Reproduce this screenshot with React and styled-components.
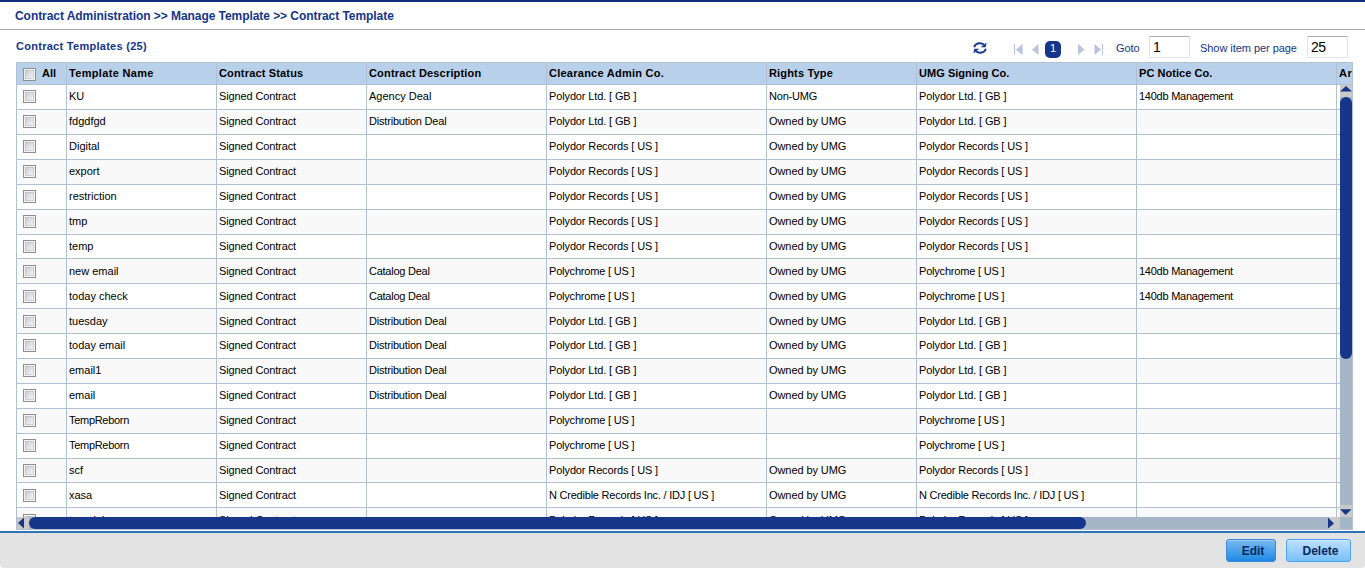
import React from 'react';
import styled, { createGlobalStyle } from 'styled-components';

const navy = '#15368a';
const line = '#b0c1d4';

const GlobalStyle = createGlobalStyle`
  * { box-sizing: border-box; }
  body { margin: 0; background: #fff; font-family: "Liberation Sans", Arial, sans-serif; font-size: 11px; color: #000; overflow: hidden; }
`;

const Page = styled.div`
  display: flex;
  flex-direction: column;
  height: 568px;
  border-top: 2px solid #112d80;
`;

const Breadcrumb = styled.div`
  height: 28px;
  flex: none;
  padding-left: 15px;
  border-bottom: 1px solid #a7aaab;
  font-weight: bold;
  font-size: 12px;
  line-height: 28px;
  letter-spacing: -0.06px;
  color: ${navy};
  white-space: nowrap;
`;

const Toolbar = styled.div`
  display: flex;
  height: 32px;
  flex: none;
  padding: 0 17px 0 16px;
  justify-content: space-between;
  color: ${navy};
  white-space: nowrap;
`;

const Title = styled.div`
  font-weight: bold;
  line-height: 33px;
  letter-spacing: 0.28px;
`;

const Pager = styled.div`
  display: flex;
  width: 375px;
  height: 32px;
`;

const PagerIcon = styled.svg`
  display: block;
  flex: none;
  margin-left: ${p => p.$gap}px;
  margin-top: ${p => p.$top}px;
`;

const PageNumber = styled.div`
  width: 16px;
  height: 17px;
  margin: 11px 0 0 6px;
  border-radius: 5px;
  background: ${navy};
  color: #fff;
  text-align: center;
  line-height: 15px;
`;

const FieldLabel = styled.label`
  flex: none;
  width: ${p => p.$w}px;
  margin-left: ${p => p.$gap}px;
  line-height: 36px;
  letter-spacing: -0.05px;
`;

const Field = styled.input`
  width: 41px;
  height: 22px;
  margin: 6px 0 0;
  padding: 0 0 1px 3px;
  border: 1px solid #e2e3ea;
  border-top-color: #abadb3;
  border-radius: 1px;
  font: 14px "Liberation Sans", Arial, sans-serif;
  letter-spacing: -0.6px;
  color: #000;
  outline: none;
`;

const Grid = styled.div`
  flex: none;
  width: 1337px;
  height: 468px;
  margin-left: 16px;
  border: 1px solid ${line};
`;

const HeaderRow = styled.div`
  display: flex;
  height: 22px;
  overflow: hidden;
  background: #b8d0ea;
  border-bottom: 1px solid ${line};
  font-weight: bold;
`;

const Body = styled.div`
  display: flex;
  height: 432px;
`;

const Rows = styled.div`
  width: 1323px;
  height: 432px;
  padding-top: 0.16px;
  overflow: hidden;
`;

const Row = styled.div`
  display: flex;
  width: 1400px;
  height: 24.9px;
  background: ${p => (p.$alt ? '#f9f9f9' : '#fff')};
  border-bottom: 1px solid ${line};
`;

const Cell = styled.div`
  flex: none;
  width: ${p => p.$w}px;
  padding-top: ${p => (p.$head ? 0 : 0.33)}px;
  padding-left: 2px;
  border-right: 1px solid ${line};
  line-height: ${p => (p.$head ? 20 : 23)}px;
  letter-spacing: ${p => p.$ls || 0}px;
  white-space: nowrap;
`;

const CheckCell = styled(Cell)`
  display: flex;
  padding-left: 6px;
`;

const Check = styled.span`
  flex: none;
  width: 13px;
  height: 13px;
  margin: 5px 6px 0 0;
  border: 1px solid #8e8f8f;
  background: linear-gradient(135deg, #c3c7cd, #f4f4f4 85%);
  box-shadow: inset 0 0 0 1px #f4f4f4, inset 0 0 0 2px rgba(174, 179, 185, 0.5);
`;

const VScroll = styled.div`
  display: flex;
  flex-direction: column;
  width: 12px;
  height: 432px;
  background: #a5b6c7;
`;

const HScroll = styled.div`
  display: flex;
  height: 12px;
  background: #a5b6c7;
`;

const ScrollButton = styled.svg`
  display: block;
  flex: none;
  width: 12px;
  height: 12px;
  background: #c9c9c9;
`;

const Thumb = styled.div`
  flex: none;
  width: ${p => p.$w}px;
  height: ${p => p.$h}px;
  border-radius: 6px;
  background: ${navy};
`;

const Spacer = styled.div`
  flex: 1;
`;

const Corner = styled.div`
  width: 12px;
  height: 12px;
  background: #a5b6c7;
`;

const Footer = styled.div`
  display: flex;
  flex: none;
  justify-content: flex-end;
  gap: 10px;
  height: 37px;
  margin-top: 1px;
  padding: 6px 14px 0 0;
  border-top: 2px solid #2f73b7;
  border-radius: 0 0 4px 4px;
  background: #e3e3e3;
`;

const Button = styled.button`
  width: ${p => p.$w}px;
  height: 23px;
  padding: 0 0 0 4px;
  border: 1px solid ${p => (p.$primary ? '#3c88d8' : '#49a5fa')};
  border-radius: 3px;
  background: ${p => (p.$primary
    ? 'linear-gradient(#7ab9ee, #1f8ae6)'
    : 'linear-gradient(#c0e0fb, #78bffa)')};
  box-shadow: inset 0 1px ${p => (p.$primary ? '#9bccf4' : '#cde7fc')};
  font: bold 12px "Liberation Sans", Arial, sans-serif;
  color: #062a5c;
`;

const columns = [
  ['Template Name', 150, 0.33],
  ['Contract Status', 150, 0.16],
  ['Contract Description', 180, 0.18],
  ['Clearance Admin Co.', 220, 0.25],
  ['Rights Type', 150, 0.17],
  ['UMG Signing Co.', 220, 0.04],
  ['PC Notice Co.', 200, 0.04],
];

const STATUS = 'Signed Contract';
const AGENCY = 'Agency Deal';
const CATALOG = 'Catalog Deal';
const DIST = 'Distribution Deal';
const OWN = 'Owned by UMG';
const NON = 'Non-UMG';
const LTD = 'Polydor Ltd. [ GB ]';
const REC = 'Polydor Records [ US ]';
const CHR = 'Polychrome [ US ]';
const IDJ = 'N Credible Records Inc. / IDJ [ US ]';
const MGMT = '140db Management';

const tracking = {
  [STATUS]: -0.13,
  [CATALOG]: -0.25,
  [DIST]: -0.19,
  [OWN]: -0.08,
  [NON]: -0.2,
  [LTD]: -0.13,
  [REC]: -0.13,
  [CHR]: -0.2,
  [IDJ]: -0.22,
  [MGMT]: -0.25,
  TempReborn: -0.3,
};

const templates = [
  ['KU', AGENCY, LTD, NON, MGMT],
  ['fdgdfgd', DIST, LTD, OWN, ''],
  ['Digital', '', REC, OWN, ''],
  ['export', '', REC, OWN, ''],
  ['restriction', '', REC, OWN, ''],
  ['tmp', '', REC, OWN, ''],
  ['temp', '', REC, OWN, ''],
  ['new email', CATALOG, CHR, OWN, MGMT],
  ['today check', CATALOG, CHR, OWN, MGMT],
  ['tuesday', DIST, LTD, OWN, ''],
  ['today email', DIST, LTD, OWN, ''],
  ['email1', DIST, LTD, OWN, ''],
  ['email', DIST, LTD, OWN, ''],
  ['TempReborn', '', CHR, '', ''],
  ['TempReborn', '', CHR, '', ''],
  ['scf', '', REC, OWN, ''],
  ['xasa', '', IDJ, OWN, ''],
  ['templale', '', REC, OWN, ''],
];

function TemplateRow({ data, alt }) {
  const [name, description, company, rights, notice] = data;
  const values = [name, STATUS, description, company, rights, company, notice];
  return (
    <Row $alt={alt}>
      <CheckCell $w={50}><Check /></CheckCell>
      {values.map((value, i) => (
        <Cell key={i} $w={columns[i][1]} $ls={tracking[value]}>{value}</Cell>
      ))}
    </Row>
  );
}

export default function App() {
  return (
    <Page>
      <GlobalStyle />
      <Breadcrumb>Contract Administration &gt;&gt; Manage Template &gt;&gt; Contract Template</Breadcrumb>
      <Toolbar>
        <Title>Contract Templates (25)</Title>
        <Pager>
          <PagerIcon $gap={0} $top={11} width="14" height="14" viewBox="0 0 14 14">
            <path d="M1.2 6.2C2 3.6 4.2 2.3 6.8 2.3c1.8 0 3 .5 4.1 1.5M12.8 7.8c-.8 2.6-3 3.9-5.6 3.9-1.8 0-3-.5-4.1-1.5" fill="none" stroke={navy} strokeWidth="2" />
            <path d="M13.6 1.4l-.9 4.8H7.8zM.4 12.6l.9-4.8h4.9z" fill={navy} />
          </PagerIcon>
          <PagerIcon $gap={27} $top={14} width="9" height="11" viewBox="0 0 9 11">
            <path d="M0 0h1v11H0zM8.5 0v11L2 5.5z" fill="#b9c3dd" />
          </PagerIcon>
          <PagerIcon $gap={9} $top={14} width="7" height="11" viewBox="0 0 7 11">
            <path d="M6.5 0v11L0 5.5z" fill="#b9c3dd" />
          </PagerIcon>
          <PageNumber>1</PageNumber>
          <PagerIcon $gap={17} $top={14} width="7" height="11" viewBox="0 0 7 11">
            <path d="M0 0v11l6.5-5.5z" fill="#b9c3dd" />
          </PagerIcon>
          <PagerIcon $gap={9} $top={14} width="9" height="11" viewBox="0 0 9 11">
            <path d="M8 0h1v11H8zM.5 0v11L7 5.5z" fill="#b9c3dd" />
          </PagerIcon>
          <FieldLabel $gap={13} $w={33}>Goto</FieldLabel>
          <Field defaultValue="1" />
          <FieldLabel $gap={10} $w={107}>Show item per page</FieldLabel>
          <Field defaultValue="25" />
        </Pager>
      </Toolbar>
      <Grid>
        <HeaderRow>
          <CheckCell $w={50} $head><Check />All</CheckCell>
          {columns.map(([label, width, ls]) => (
            <Cell key={label} $w={width} $ls={ls} $head>{label}</Cell>
          ))}
          <Cell $w={100} $ls={0.6} $head>Artist</Cell>
        </HeaderRow>
        <Body>
          <Rows>
            {templates.map((data, i) => <TemplateRow key={i} data={data} alt={i % 2 === 1} />)}
          </Rows>
          <VScroll>
            <ScrollButton viewBox="0 0 12 12"><path d="M0 6.5L6 1l6 5.5z" fill={navy} /></ScrollButton>
            <Thumb $w={12} $h={262} />
            <Spacer />
            <ScrollButton viewBox="0 0 12 12"><path d="M0 4.3h11.5L5.7 10z" fill={navy} /></ScrollButton>
          </VScroll>
        </Body>
        <HScroll>
          <ScrollButton viewBox="0 0 12 12"><path d="M7 .5v11L1 6z" fill={navy} /></ScrollButton>
          <Thumb $w={1057} $h={12} />
          <Spacer />
          <ScrollButton viewBox="0 0 12 12"><path d="M0 .5v11L6 6.5z" fill={navy} /></ScrollButton>
          <Corner />
        </HScroll>
      </Grid>
      <Footer>
        <Button $w={50} $primary>Edit</Button>
        <Button $w={65}>Delete</Button>
      </Footer>
    </Page>
  );
}
